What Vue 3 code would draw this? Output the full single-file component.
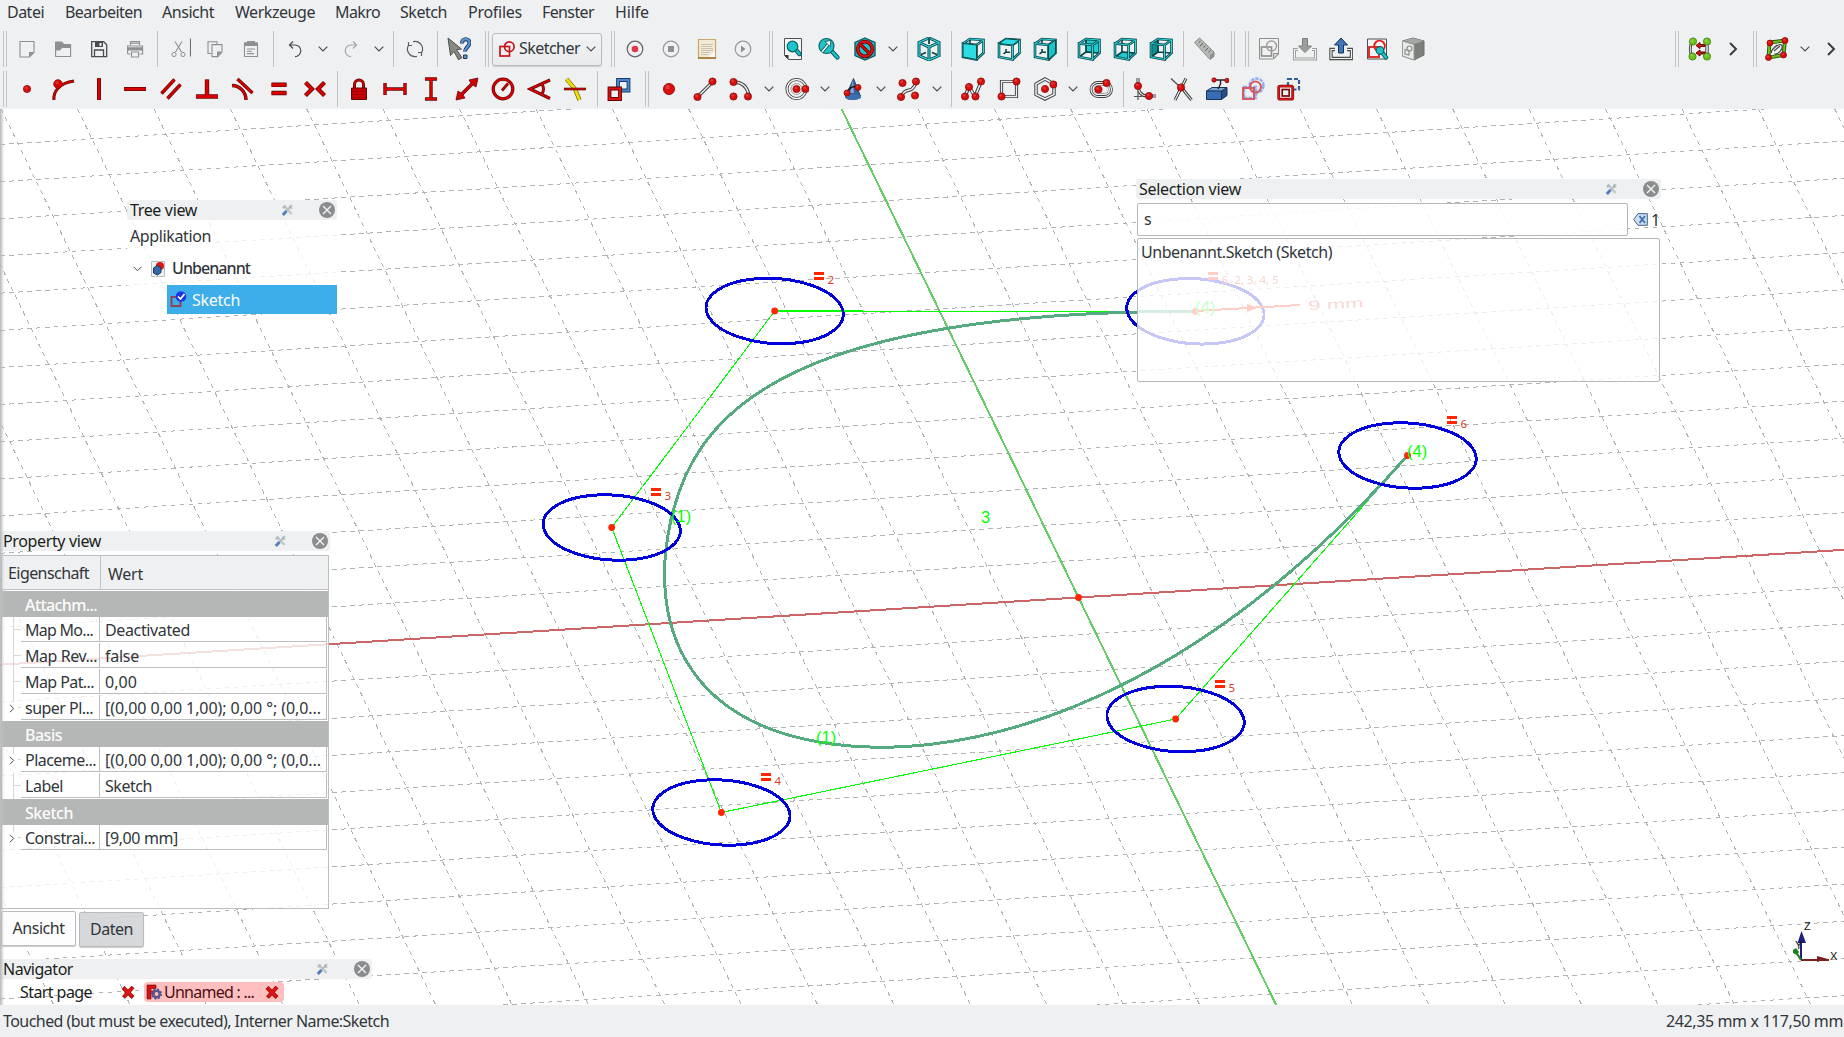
<script setup>
const vFit = {
  mounted(el, { value }) {
    el.style.letterSpacing = '0px'
    const w = el.getBoundingClientRect().width
    el.style.letterSpacing = (value - w) / el.textContent.length + 'px'
  },
}

const menus = [
  ['Datei', 7, 37], ['Bearbeiten', 65, 77], ['Ansicht', 162, 52], ['Werkzeuge', 235, 80], ['Makro', 335, 45],
  ['Sketch', 400, 47], ['Profiles', 468, 54], ['Fenster', 542, 52], ['Hilfe', 615, 34],
].map((m, i, a) => ({ label: m[0], w: m[2], gap: m[1] - (i ? a[i - 1][1] + a[i - 1][2] : 0) }))

/* drawing helpers for the 24px icons */
const ball = (x, y, r = 3.6, c = '#d90d0d', s = '#8a0a0a') =>
  `<circle cx="${x}" cy="${y}" r="${r}" fill="${c}" stroke="${s}" stroke-width=".8"/><circle cx="${x - r * 0.25}" cy="${y - r * 0.3}" r="${r * 0.4}" fill="#fff" opacity=".18"/>`
const red = (d, w = 2.6) =>
  `<path d="${d}" fill="none" stroke="#5e0808" stroke-width="${w + 1.4}"/><path d="${d}" fill="none" stroke="#d80000" stroke-width="${w}"/>`
const tube = (d, w = 3.4) =>
  `<path d="${d}" fill="none" stroke="#3c3f3f" stroke-width="${w}"/><path d="${d}" fill="none" stroke="#eff0ee" stroke-width="${w - 1.9}"/>`
const thin = (d, c = '#8d8f91', w = 1.1) => `<path d="${d}" fill="none" stroke="${c}" stroke-width="${w}"/>`
const fill = (d, c, s = 'none', w = 1) => `<path d="${d}" fill="${c}" stroke="${s}" stroke-width="${w}"/>`

const cube = (face) => {
  const faces = {
    front: 'M2 6.5 15.5 8v14.5L2 20Z', top: 'M2 6.5 9 1.8 22.5 3 15.5 8Z', right: 'M15.5 8 22.5 3v13l-7 6.5Z',
    rear: 'M9 2 22.5 3v13L9 15Z', bottom: 'M2 20 9 15l13.5 1-7 6.5Z', left: 'M2 6.5 9 2v13l-7 5Z',
  }
  const inner = face === 'rear' || face === 'bottom' || face === 'left'
  const all = 'M2 6.5 15.5 8v14.5L2 20ZM2 6.5 9 2 22.5 3v13l-7 6.5M15.5 8 22.5 3'
  const edge = (d) => thin(d, '#06474a', 2.6) + thin(d, '#2fd3da', 1)
  const hidden = inner ? thin('M9 2v13l13.5 1M9 15 2 20', '#06474a', 1.6) : thin('M9 3v5M9 12v3l-2.500 1.800M9 15l4 .3', '#06474a', 1.6)
  return (inner ? fill(faces[face], face === 'left' ? '#0f8f96' : '#1fcad1', '#06474a', 1) : '') + hidden + edge(all) +
    (inner ? '' : fill(faces[face], face === 'right' ? '#19c3ca' : '#2bdde2', '#06474a', 1))
}
const lens = (x, y, r, hx, hy) =>
  `<path d="M${x + r * 0.7} ${y + r * 0.7} ${hx} ${hy}" stroke="#075c60" stroke-width="4.4" stroke-linecap="round"/><path d="M${x + r * 0.7} ${y + r * 0.7} ${hx} ${hy}" stroke="#19c6cd" stroke-width="2.4" stroke-linecap="round"/><circle cx="${x}" cy="${y}" r="${r}" fill="#1cc3c9" stroke="#0a6468" stroke-width="1.2"/>`
const hex = 'M12 1 22 5.5v13L12 23 2 18.5v-13Z'

const icons = {
  new: thin('M5 4.5h14v11l-4.5 4.5H5Z') + fill('M19 15h-5v5Z', '#8d8f91'),
  open: thin('M4.6 5v14.5h15V8') + fill('M4 4.5h7l2 2.5h7v4h-9l-2 2.5H4Z', '#8d8f91'),
  save: thin('M4.7 4.7h12l3 3v12h-15Z', '#4a4d50', 1.3) + fill('M8 4.5h8V10H8Z', '#4a4d50') + fill('M12.5 6h2v3h-2Z', '#eff0f1') + thin('M7.5 19.5v-6.500h9v6.500', '#4a4d50', 1.3),
  print: thin('M7.500 8V4.600h9V8M7.500 6.300h9M4.600 17V11h15v6h-3M7.500 17H4.600M4.600 11V9h15v2M8.500 15h7v5h-7Z') + fill('M4.500 10.500h15v3h-15Z', '#8d8f91'),
  cut: thin('M8 4.500 14.500 15M15 4.500 8.500 15') + '<circle cx="7" cy="17.500" r="2.100" fill="none" stroke="#8d8f91"/><circle cx="16" cy="17.500" r="2.100" fill="none" stroke="#8d8f91"/>' + thin('M23.500 1.500v18', '#6d7072'),
  copy: thin('M8 16.500H5V4.700h9v3M9 7.600h10v7.500l-4 4.500H9Z') + fill('M19 14.500h-5v5Z', '#8d8f91'),
  paste: thin('M5.500 6h13v13.500h-13Z') + fill('M5 5.500h3V4h8v1.500h3V9H5Z', '#8d8f91') + thin('M8 12h8M8 14.300h5M8 16.600h7'),
  undo: thin('M10 4.500 6.500 8l3.500 3.500M6.500 8h5.500a5.800 5.800 0 0 1 0 11.600', '#4a4d50', 1.2),
  redo: thin('M14 4.500 17.500 8 14 11.500M17.500 8H12a5.800 5.800 0 0 0 0 11.600', '#a3a5a7', 1.2),
  refresh: thin('M10 4.700a7.500 7.500 0 0 1 8.500 11M18.500 19v-3.500H15M14 19.300a7.500 7.500 0 0 1-8.500-11M5.500 5v3.500H9', '#5c5f61', 1.2),
  whats: `<path d="M15 6.500c0-6 7.500-5.500 7.500-.5 0 4-4.500 4-4.500 8.500" fill="none" stroke="#193a63" stroke-width="4"/><path d="M15 6.500c0-6 7.500-5.500 7.500-.5 0 4-4.500 4-4.500 8.500" fill="none" stroke="#5b94cf" stroke-width="2.200"/>` + fill('M16.500 18h3.500v3.500h-3.500Z', '#5b94cf', '#193a63') + fill('M1 1 14.500 12l-5 .7 5.500 8-3.500 2-4.500-8.200-3.500 4Z', '#858a83', '#4d504c', 1),
  record: '<circle cx="12" cy="12" r="7.800" fill="none" stroke="#5f6264" stroke-width="1.200"/><circle cx="12" cy="12" r="3.300" fill="#e0384a"/>',
  stop: '<circle cx="12" cy="12" r="7.800" fill="none" stroke="#989a9c" stroke-width="1.200"/>' + fill('M9 9h6v6H9Z', '#8d8f91'),
  macro: fill('M3.500 2.500h17v19h-17Z', '#f3ead6', '#c9a66a', 1.200) + thin('M3 21h18', '#ad8441', 2) + thin('M6 7.500h12M6 9.500h11M6 11.500h12M6 13.500h12M6 15.500h9M6 17.500h7', '#c5bda9', .9) + fill('M20 14v6h-6Z', '#fff'),
  play: '<circle cx="12" cy="12" r="7.800" fill="none" stroke="#989a9c" stroke-width="1.200"/>' + fill('M10 8.500 14.500 12 10 15.500Z', '#8d8f91'),
  fitall: fill('M3.500 1.500h17v21h-13l-4-4Z', '#f4f5f4', '#4f5250') + fill('M3.500 18h4v4.500Z', '#333') + lens(11.500, 9.500, 5.300, 18.500, 17),
  fitsel: lens(9.500, 9, 7.500, 20.500, 20.500) + thin('M5 15 11.500 7', '#084d50', 3.200) + thin('M5 15 11.500 7', '#fff', 1.600) + fill('M8 4.500 14 3.500 13 9.500Z', '#fff', '#084d50', .8),
  draw: fill(hex, '#1fc4cb', '#08575b', 1.300) + '<circle cx="12" cy="12" r="7.300" fill="none" stroke="#5e0000" stroke-width="3.800"/><circle cx="12" cy="12" r="7.300" fill="none" stroke="#e01010" stroke-width="2.200"/>' + red('M7 7 17 17', 2),
  iso: thin(hex + 'M2 5.500 12 10 22 5.500M12 10v13', '#06474a', 3) + thin(hex + 'M2 5.500 12 10 22 5.500M12 10v13', '#33d6dc', 1.200) + thin('M12 1v6M4 17.500l5-2M20 17.500l-5-2', '#06474a', 1.800),
  front: cube('front'), top: cube('top'), right: cube('right'), rear: cube('rear'), bottom: cube('bottom'), left: cube('left'),
  ruler: fill('M1.500 5.500 6.500 1 21 15v4.500L17 22.500Z', '#b5b7b4', '#8b8d8a') + fill('M17 18 21 15v4.500L17 22.500Z', '#8e908d') + thin('M7.500 4 5.800 5.600M10 6.300 7 9M12.500 8.700l-2 1.800M15 11l-3 2.800M17.500 13.400l-2 1.800', '#5e605e', 1),
  newsk: fill('M2.500 1.500h19v15.500l-5 5h-14Z', '#f1f1f1', '#8d8f8d') + '<rect x="4.500" y="10" width="10" height="9" fill="none" stroke="#8d8f8d" stroke-width="1.600"/><circle cx="14.500" cy="9" r="5" fill="none" stroke="#9fa19f" stroke-width="1.500"/>' + fill('M21.500 16.500h-5v5.500Z', '#d8d8d8', '#8d8f8d'),
  leavein: thin('M5 12.500H1.500v9.500h21v-9.500H19', '#a0a2a0', 3) + thin('M5 12.500H1.500v9.500h21v-9.500H19', '#f3f3f3', 1) + fill('M9.500 1.500h5V9h4L12 15.500 5.500 9h4Z', '#9b9e9a', '#7c7f7b'),
  leave: thin('M6 12.500H2v9h20.500v-9H18', '#4b4e4c', 3.400) + thin('M6 12.500H2v9h20.500v-9H18', '#f3f3f3', 1.200) + fill('M9.500 16V8h-4L12 1l6.500 7h-4v8Z', '#3f74b5', '#16365f'),
  viewsk: fill('M2.500 2h19v20h-19Z', '#f6f6f6', '#4f5250') + '<rect x="4" y="10" width="10" height="10" fill="none" stroke="#e01b1b" stroke-width="1.800"/><circle cx="14.500" cy="9" r="5.300" fill="none" stroke="#e01b1b" stroke-width="1.800"/>' + lens(15, 13.500, 3.800, 21, 20.500),
  mapsk: fill('M1.500 4 12 1l11 3v14l-10 5-11.500-4Z', '#7d7f7d', '#6d6f6d') + fill('M1.500 4 13 7.500V23L1.500 19Z', '#e9e9e9', '#9a9c9a') + fill('M3 3.500 12 1l10.500 3L13 7Z', '#a5a7a5') + thin('M4 12.500l4 1v4.500l-4-1Z', '#8d8f8d', 1.200) + '<circle cx="8.500" cy="11.500" r="2.500" fill="none" stroke="#8d8f8d" stroke-width="1.200"/>',

  cpoint: ball(12, 12, 3.600),
  ccoin: red('M3 23c-1-8 5-17 20-19', 1.700) + ball(7, 7, 4.300, '#d40000'),
  cvert: red('M12 1v22'),
  chor: red('M1 12h22'),
  cpar: red('M2.500 16.500 15.500 2.500M8.500 21.500 21.500 7.500', 2),
  cperp: red('M12 2.500v17M1 19.500h22', 3),
  ctan: red('M6.500 2 21.500 16', 2) + red('M1 8.500c8 0 14 7 14 14.500', 2),
  ceq: red('M4.500 7.800h15M4.500 16h15', 3.200),
  csym: red('M2.500 5.500 9 12l-6.500 6.500M21.500 5.500 15 12l6.500 6.500', 2.800),
  lock: red('M7.500 12V7.500a4.500 4.500 0 0 1 9 0V12', 1.600) + fill('M4.500 11h15v11.500h-15Z', '#cc0000', '#5e0808') + thin('M5 14.500h14M5 17.500h14M5 20.500h14', '#8f0000', .7),
  hdist: red('M2 6v12M22 6v12M2 12h20', 2),
  vdist: red('M6 2h12M6 22h12M12 2v20', 2),
  dist: red('M4 20 20 4', 2.200) + fill('M23 1l-2 9-3-2-2-2-2-3ZM1 23l2-9 3 2 2 2 2 3Z', '#d80000', '#5e0808', .8),
  radius: '<circle cx="12" cy="12" r="9.800" fill="none" stroke="#5e0808" stroke-width="3.200"/><circle cx="12" cy="12" r="9.800" fill="none" stroke="#d80000" stroke-width="1.900"/>' + red('M11 13.500 17 6.500', 1.300),
  angle: red('M23 3 3 12l20 9.500', 1.700) + red('M15 7q3 5 0 10', 1.500),
  snell: thin('M3.500 2 12 12l4.500 11', '#6f6500', 4.200) + thin('M3.500 2 12 12l4.500 11', '#f0dc10', 2.800) + red('M1 12h22', 1.200),
  swap: '<path d="M11 3h10.500v10.500H11Z" fill="none" stroke="#173a6d" stroke-width="3.800"/><path d="M11 3h10.500v10.500H11Z" fill="none" stroke="#4c86cc" stroke-width="2"/><path d="M2.500 11.500H13V22H2.500Z" fill="#eff0f1" stroke="#5e0000" stroke-width="3.800"/><path d="M2.500 11.500H13V22H2.500Z" fill="none" stroke="#e01010" stroke-width="2"/>',
  gpoint: ball(12, 12, 5.600),
  gline: tube('M5 19.500 20 4.500') + ball(4.500, 20) + ball(19.500, 4.500),
  garc: tube('M4.500 5c9 0 14 5 15.500 14') + ball(4.500, 5) + ball(4.500, 19.500) + ball(19, 19.500),
  gcircle: '<circle cx="11.500" cy="12" r="9.500" fill="none" stroke="#3c3f3f" stroke-width="3"/><circle cx="11.500" cy="12" r="9.500" fill="none" stroke="#f1f2f0" stroke-width="1.500"/><circle cx="11.500" cy="12" r="5.500" fill="#f1f2f0" stroke="#8a8c8b" stroke-width=".8"/>' + ball(11.500, 12) + ball(20.500, 12),
  cone: fill('M12.500 1.500 19.500 19c1 4-15.500 5-15 .5Z', '#356199', '#1b3557', .8) + fill('M12 2.500 9 16h4Z', '#7ba6d6') + '<ellipse cx="12" cy="20" rx="8" ry="3" fill="#3b6fb0"/>' + thin('M5.500 16q4-8 12-6', '#111', 1.500) + ball(6, 16, 3) + ball(17, 10.500, 3),
  bspline: tube('M4 20.500c3-9 8-6 11-8.500s4-6 5-8') + ball(5.500, 6) + ball(19, 4.500) + ball(4, 20) + ball(18, 18.500),
  poly: tube('M4 19.500 8 9.500l6 10L20 5') + ball(4, 19.500) + ball(8, 10) + ball(14.500, 19.500) + ball(20, 4.500),
  rect: tube('M4.500 4.500h15v15h-15Z', 3.200) + ball(19.500, 4.500) + ball(4.500, 19.500),
  hexa: tube('M12 2 21 7v10.500L12 22 3 17.500V7Z') + ball(12, 12) + ball(20.500, 7.500),
  slot: '<rect x="2" y="5.500" width="20.500" height="14" rx="7" fill="none" stroke="#3c3f3f" stroke-width="2.800"/><rect x="2" y="5.500" width="20.500" height="14" rx="7" fill="none" stroke="#f1f2f0" stroke-width="1.200"/><rect x="5" y="8.500" width="14.500" height="8" rx="4" fill="none" stroke="#8a8c8b" stroke-width=".8"/>' + ball(9.500, 12.500) + ball(17.500, 6),
  fillet: tube('M5 1v8q1 10 9 10h9', 3) + thin('M5 14v9M1 19.500h8', '#555', 1.200) + ball(5, 9) + ball(16, 19),
  trim: tube('M17 1.500 6 23M12 10l10.500 13', 3) + thin('M2 1.500 10 9', '#555', 1.400) + ball(12, 10.500),
  ext: fill('M1.500 14 7 10.500h15l-5 4Z', '#7ea6d9', '#15335c') + fill('M1.500 14h15v8.500h-15Z', '#376db0', '#15335c') + fill('M16.500 14 22 10.500v8l-5.500 4Z', '#244f86', '#15335c') + thin('M9 3h13M15.500 3v4M13 12l3-6', '#222', 1.400) + ball(9, 3, 2.200) + ball(22, 3.500, 2.200),
  carbon: '<circle cx="15.500" cy="8.500" r="7" fill="none" stroke="#8fabf0" stroke-width="2.400" stroke-dasharray="3.500 1"/><rect x="3" y="10" width="12" height="11" fill="none" stroke="#8fabf0" stroke-width="2.400" stroke-dasharray="3.500 1"/><circle cx="14.500" cy="10" r="5.500" fill="none" stroke="#d65a5f" stroke-width="2"/><rect x="2" y="11" width="11" height="11" fill="none" stroke="#d65a5f" stroke-width="2"/>',
  constr: '<path d="M11 2h11v10.500H11Z" fill="none" stroke="#2f5d9e" stroke-width="2.200" stroke-dasharray="4 2"/><rect x="1.700" y="9.200" width="14" height="13" rx="1.500" fill="#fff" stroke="#8a0c0c" stroke-width="2.800"/><rect x="1.700" y="9.200" width="14" height="13" rx="1.500" fill="none" stroke="#d81616" stroke-width="1.500"/><rect x="5.200" y="12.500" width="7" height="6.500" fill="#eff0f1" stroke="#7a0a0a" stroke-width="1.700"/>',
  surf1: tube('M20 4.500v15', 3.400) + tube('M5 4.500q-3.500 7.500 0 15', 2.800) + fill('M18 7.500h-5V5.500L9 8.500l4 3V9.500h5ZM18 15h-5v-2l-4 3 4 3v-2h5Z', '#d41414', '#600') + ball(6, 4.500, 3.600, '#6cc41b', '#3b7a08') + ball(20, 4.500, 3.600, '#6cc41b', '#3b7a08') + ball(5.500, 19.500, 3.600, '#6cc41b', '#3b7a08') + ball(20, 19.500, 3.600, '#6cc41b', '#3b7a08'),
  surf2: thin('M4.500 5.500 20 3.500 18.500 18 3.500 20.500Z', '#28520c', 3.800) + thin('M4.500 5.500 20 3.500 18.500 18 3.500 20.500Z', '#6cc41b', 2) + thin('M6.500 16c-1-4 8-10 10-8s-2 10-7 9M9 14l6-5M8 12l4-4', '#3f4241', 1.100) + ball(5, 6, 3) + ball(20, 3.500, 3) + ball(3.500, 20.500, 3) + ball(18.500, 18, 3),
}

const row1 = 'H new open save print | cut copy paste | undo v redo v | refresh | whats H combo H record stop macro play H fitall fitsel draw v | iso | front top right | rear bottom left | ruler H H newsk leavein leave viewsk mapsk'.split(' ')
const row1r = 'H surf1 > H surf2 v >'.split(' ')
const row2 = 'H cpoint ccoin cvert chor cpar cperp ctan ceq csym | lock hdist vdist dist radius angle snell | swap H gpoint gline garc v gcircle v cone v bspline v | poly rect hexa v slot | fillet trim ext carbon constr'.split(' ')
const toolbars = [{ left: row1, right: row1r }, { left: row2, right: [] }]

/* sketch scene, in pixels of the 3D view (view origin = window 0,109) */
const OX = 1078.5, OY = 488.5, SA = -0.0623, SB = 0.485
const gridA = [], gridB = []
for (let k = -17; k <= 14; k++) {
  if (!k) continue
  const y = OY + k * 37.15
  gridA.push([0, y - OX * SA, 1844, y + (1844 - OX) * SA])
}
for (let k = -18; k <= 15; k++) {
  if (!k) continue
  const x = OX + k * 76.4
  gridB.push([x - OY * SB, 0, x + (896 - OY) * SB, 896])
}
const P = [[1195.4, 202.3], [774.700, 202], [611.700, 418.500], [721.400, 703.500], [1175.600, 610], [1407.500, 346.500]]
const mix = (a, b, t) => [a[0] + (b[0] - a[0]) * t, a[1] + (b[1] - a[1]) * t]
const B2 = mix(P[1], P[2], 0.5), C1 = mix(P[2], P[3], 1 / 3), C2 = mix(P[2], P[3], 2 / 3), D1 = mix(P[3], P[4], 0.5)
const B3 = mix(B2, C1, 0.5), C3 = mix(C2, D1, 0.5)
const curve = `M${P[0]}C${P[1]} ${B2} ${B3}C${C1} ${C2} ${C3}C${D1} ${P[4]} ${P[5]}`
const equals = P.map((p, i) => ({ x: Math.round(p[0] + (i ? 39.300 : 12.500)), y: Math.round(p[1] - 39.500), t: i ? String(i + 1) : '6, 2, 3, 4, 5' }))

const props = [
  { cat: 'Attachm...' },
  { k: 'Map Mo...', kw: 68, v: 'Deactivated', w: 85 },
  { k: 'Map Rev...', kw: 72, v: 'false', w: 34 },
  { k: 'Map Pat...', kw: 69, v: '0,00', w: 32 },
  { k: 'super Pl...', kw: 68, v: '[(0,00 0,00 1,00); 0,00 °; (0,0...', w: 216, e: 1 },
  { cat: 'Basis' },
  { k: 'Placeme...', kw: 71, v: '[(0,00 0,00 1,00); 0,00 °; (0,0...', w: 216, e: 1 },
  { k: 'Label', kw: 38, v: 'Sketch', w: 47 },
  { cat: 'Sketch' },
  { k: 'Constrai...', kw: 70, v: '[9,00 mm]', w: 73, e: 1 },
]
const catW = { 'Attachm...': 72, Basis: 37, Sketch: 48 }

const toolIcon = '<path d="M3 1.500 10.500 10" stroke="#c2c6c9" stroke-width="2.400"/><path d="M1 3.500 3.500 1l1.500 2-2 2Z" fill="#b5babd"/><path d="M11 1 5 7.500" stroke="#b5babd" stroke-width="1.600"/><path d="M5.500 7 1.800 11" stroke="#4f7fbd" stroke-width="3"/><path d="M9 1.500v2.500h2.500" fill="none" stroke="#a0a5a8" stroke-width="1.200"/>'
const closeIcon = '<circle cx="8" cy="8" r="8" fill="#8a8c8e"/><path d="M4 4 12 12M12 4 4 12" stroke="#f4f4f4" stroke-width="1.400"/>'
const redX = '<path d="M2 2.500 12 12.500M12 2 2.500 12.500" stroke="#8a0c0c" stroke-width="4"/><path d="M2.500 3 11.500 12M11.500 2.500 3 12" stroke="#df1515" stroke-width="2.800"/>'
</script>

<template>
  <div class="app">
    <nav class="menubar">
      <span v-for="m in menus" :key="m.label" class="menu" :style="{ marginLeft: m.gap + 'px', width: m.w + 'px' }"><span v-fit="m.w">{{ m.label }}</span></span>
    </nav>
    <div v-for="(bar, b) in toolbars" :key="b" class="toolbar">
      <div v-for="(side, s) in [bar.left, bar.right]" :key="s" class="side">
        <template v-for="(it, i) in side" :key="i">
          <i v-if="it === 'H'" class="handle" />
          <i v-else-if="it === '|'" class="sep" />
          <span v-else-if="it === 'v'" class="chev"><svg width="10" height="6" viewBox="0 0 10 6"><path d="M.7.7 5 5 9.300.7" fill="none" stroke="#4a4d50" stroke-width="1.200" /></svg></span>
          <span v-else-if="it === '>'" class="more"><svg width="9" height="14" viewBox="0 0 9 14"><path d="M1 1 7 7 1 13" fill="none" stroke="#3b3e41" stroke-width="2" /></svg></span>
          <div v-else-if="it === 'combo'" class="combo">
            <svg width="16" height="16" viewBox="0 0 16 16" fill="none" stroke="#c8141e" stroke-width="1.700"><rect x="1" y="5.500" width="9.500" height="9.500" /><circle cx="10.300" cy="5.700" r="4.800" /></svg>
            <span v-fit="61" class="combo-text">Sketcher</span>
            <svg width="10" height="6" viewBox="0 0 10 6"><path d="M.7.7 5 5 9.300.7" fill="none" stroke="#4a4d50" stroke-width="1.200" /></svg>
          </div>
          <span v-else class="tool"><svg width="24" height="24" viewBox="0 0 24 24" v-html="icons[it]" /></span>
        </template>
      </div>
    </div>

    <main class="view">
      <svg class="scene" width="1844" height="896" viewBox="0 0 1844 896">
        <g stroke="#b2b2b2" stroke-width="1" shape-rendering="crispEdges">
          <line v-for="(l, i) in gridA" :key="'a' + i" :x1="l[0]" :y1="l[1]" :x2="l[2]" :y2="l[3]" stroke-dasharray="4.600 4.400" />
          <line v-for="(l, i) in gridB" :key="'b' + i" :x1="l[0]" :y1="l[1]" :x2="l[2]" :y2="l[3]" stroke-dasharray="4.400 4.600" />
        </g>
        <g fill="none" shape-rendering="crispEdges">
          <line x1="0" :y1="OY - OX * SA" x2="1844" :y2="OY + (1844 - OX) * SA" stroke="#cc6666" stroke-width="2" />
          <line :x1="OX - OY * SB" y1="0" :x2="OX + (896 - OY) * SB" y2="896" stroke="#66cc66" stroke-width="2" />
          <polyline :points="P.join(' ')" stroke="#00ff00" stroke-width="1.100" />
          <path :d="curve" stroke="#55aa80" stroke-width="3" />
          <circle v-for="(p, i) in P" :key="i" r="1" :transform="`matrix(66.8 -4.180 15.700 32.450 ${p[0]} ${p[1]})`" stroke="#0000dc" stroke-width="3" vector-effect="non-scaling-stroke" />
          <path d="M1195 202 1300 196" stroke="#ff2600" stroke-width="2" />
        </g>
        <g fill="#ff2600">
          <circle v-for="(p, i) in P" :key="i" :cx="p[0]" :cy="p[1]" r="3.400" />
          <circle :cx="OX" :cy="OY" r="3.400" />
          <path d="M1258 198.500 1247 195v8Z" />
          <template v-for="(e, i) in equals" :key="i">
            <rect :x="e.x" :y="e.y" width="10" height="3" /><rect :x="e.x" :y="e.y + 5" width="10" height="3" />
            <text :x="e.x + 13.500" :y="e.y + 12" class="sub">{{ e.t }}</text>
          </template>
          <text class="dim" transform="translate(1308.500 201) rotate(-3) scale(1.700 1)" fill="#e05040">9 mm</text>
        </g>
        <g class="knot">
          <text x="671" y="413">(1)</text>
          <text x="816" y="634">(1)</text>
          <text x="1195" y="203.500">(4)</text>
          <text x="1407" y="347.500">(4)</text>
          <text x="981" y="414">3</text>
        </g>
        <g fill="none" stroke-width="2" font-family="Liberation Sans, sans-serif" font-size="11">
          <path d="M1801 851v-25" stroke="#20207c" /><path d="M1801.500 822l4.500 12h-8.500Z" fill="#20207c" stroke="none" />
          <path d="M1801 851h28" stroke="#7c2020" /><path d="M1828 850l-11-3v6Z" fill="#7c2020" stroke="none" />
          <path d="M1801 851l-5-8" stroke="#207c20" /><path d="M1793 841l3-2 3 4-2 3-4-2Z" fill="#208020" stroke="none" />
          <text x="1804" y="821" fill="#111">Z</text><text x="1830" y="850.500" fill="#111">X</text><text x="1795" y="840" fill="#111">Y</text>
        </g>
      </svg>

      <section class="dock tree">
        <header class="title"><span v-fit="67">Tree view</span><svg class="tl" width="12" height="12" viewBox="0 0 12 12" v-html="toolIcon" /><svg class="cl" width="16" height="16" viewBox="0 0 16 16" v-html="closeIcon" /></header>
        <div class="tree-body">
          <div class="row app-row"><span v-fit="81">Applikation</span></div>
          <div class="row doc-row">
            <svg width="9" height="6" viewBox="0 0 9 6"><path d="M.5.7 4.500 4.700 8.500.7" fill="none" stroke="#4a4d50" /></svg>
            <svg class="doc" width="14" height="16" viewBox="0 0 14 16"><path d="M.5.500h13v15H.5Z" fill="#f2f2f2" stroke="#bcbcbc" /><circle cx="9" cy="5" r="4" fill="#e01616" /><path d="M2.500 7 6 4.500 10 6.500v5L6.500 14 2.500 12Z" fill="#3568a5" stroke="#1a3760" /></svg>
            <span v-fit="78" class="medium">Unbenannt</span>
          </div>
          <div class="row sel-row">
            <svg width="17" height="17" viewBox="0 0 17 17"><rect x="1.500" y="6" width="9" height="9" fill="none" stroke="#983848" stroke-width="1.800" /><circle cx="11" cy="5.500" r="5.300" fill="#1a35e8" /><path d="M8 5.500 10.500 8 14.500 3" fill="none" stroke="#fff" stroke-width="1.700" /></svg>
            <span v-fit="48">Sketch</span>
          </div>
        </div>
      </section>

      <section class="dock property">
        <header class="title"><span v-fit="98">Property view</span><svg class="tl" width="12" height="12" viewBox="0 0 12 12" v-html="toolIcon" /><svg class="cl" width="16" height="16" viewBox="0 0 16 16" v-html="closeIcon" /></header>
        <div class="table">
          <div class="thead"><span class="th1"><span v-fit="81">Eigenschaft</span></span><span class="th2"><span v-fit="35">Wert</span></span></div>
          <template v-for="(p, i) in props" :key="i">
            <div v-if="p.cat" class="cat"><span v-fit="catW[p.cat]">{{ p.cat }}</span></div>
            <div v-else class="prop">
              <span class="branch"><svg v-if="p.e" width="6" height="9" viewBox="0 0 6 9"><path d="M1 .8 4.700 4.500 1 8.200" fill="none" stroke="#4a4d50" /></svg></span>
              <span class="key"><span v-fit="p.kw">{{ p.k }}</span></span>
              <span class="val"><span v-fit="p.w">{{ p.v }}</span></span>
            </div>
          </template>
        </div>
        <div class="tabs"><div class="tab on"><span v-fit="52">Ansicht</span></div><div class="tab off"><span v-fit="43">Daten</span></div></div>
      </section>

      <section class="dock navigator">
        <header class="title"><span v-fit="70">Navigator</span><svg class="tl" width="12" height="12" viewBox="0 0 12 12" v-html="toolIcon" /><svg class="cl" width="16" height="16" viewBox="0 0 16 16" v-html="closeIcon" /></header>
        <div class="nav-row">
          <div class="page start"><span v-fit="72">Start page</span><svg width="14" height="14" viewBox="0 0 14 14" v-html="redX" /></div>
          <div class="page current">
            <svg width="17" height="16" viewBox="0 0 17 16"><path d="M1 1h9v3.500H5v2.500h3.500v3H5v5H1Z" fill="#d01414" stroke="#700" stroke-width=".6" /><circle cx="10.500" cy="10" r="3.300" fill="none" stroke="#5a5490" stroke-width="2.600" /><circle cx="10.500" cy="10" r="4.900" fill="none" stroke="#5a5490" stroke-width="1.500" stroke-dasharray="2 1.850" /></svg>
            <span v-fit="90" class="un">Unnamed : ...</span><svg width="14" height="14" viewBox="0 0 14 14" v-html="redX" />
          </div>
        </div>
      </section>

      <section class="dock selection">
        <header class="title"><span v-fit="102">Selection view</span><svg class="tl" width="12" height="12" viewBox="0 0 12 12" v-html="toolIcon" /><svg class="cl" width="16" height="16" viewBox="0 0 16 16" v-html="closeIcon" /></header>
        <div class="search">
          <div class="input"><span>s</span></div>
          <svg width="15" height="13" viewBox="0 0 15 13"><path d="M5 .700h9.300v11.600H5L.700 6.500Z" fill="#cfe0f2" stroke="#3f5f86" /><path d="M6.500 3 12 10M12 3 6.500 10" stroke="#3f74b5" stroke-width="2" /></svg>
          <span class="count">1</span>
        </div>
        <div class="list"><span v-fit="191">Unbenannt.Sketch (Sketch)</span></div>
      </section>
      <div class="edge" />
    </main>

    <footer class="status"><span v-fit="386">Touched (but must be executed), Interner Name:Sketch</span><span v-fit="177">242,35 mm x 117,50 mm</span></footer>
  </div>
</template>

<style>
body { margin: 0; overflow: hidden; }
</style>

<style scoped>
.app { width: 1844px; height: 1037px; display: flex; flex-direction: column; background: #eff0f1; font: 16px/20px "Noto Sans", sans-serif; color: #31363b; overflow: hidden; white-space: nowrap; }
span { display: inline-block; }
svg { display: block; flex: none; }
.menubar { height: 29px; display: flex; align-items: flex-start; padding-top: 2px; box-sizing: border-box; }
.menu { flex: none; }
.toolbar { height: 40px; display: flex; justify-content: space-between; }
.side { display: flex; align-items: center; }
.side:first-child { margin-left: -5px; }
.side:last-child { margin-right: 1px; }
.tool { width: 36px; display: flex; justify-content: center; }
.handle { width: 4px; height: 36px; margin: 0 2px 0 8px; box-sizing: border-box; border: solid #c1c3c4; border-width: 0 1px; flex: none; }
.sep { width: 1px; height: 36px; margin: 0 3px 0 4px; background: #bfc1c2; flex: none; }
.chev { width: 20px; display: flex; justify-content: center; }
.more { width: 28px; box-sizing: border-box; display: flex; justify-content: center; padding-left: 5px; }
.combo { width: 110px; height: 33px; margin: 0 1px; box-sizing: border-box; border: 1px solid #b9bbbd; border-radius: 3px; box-shadow: 0 1px 1px #c9cbcc; display: flex; align-items: center; padding: 0 6px; background: linear-gradient(#f2f3f4, #e9eaeb); }
.combo-text { margin: 0 7px 2px 4px; }
.combo svg:last-child { margin-left: -1px; }
.view { position: relative; height: 896px; background: #fff; overflow: hidden; flex: none; }
.sub { font: 11.500px "Noto Sans", sans-serif; fill: #d83a28; }
.dim { font: 13px "Liberation Sans", sans-serif; }
.knot { fill: #00ff00; font: 16.500px "Liberation Sans", sans-serif; }
.dock { position: absolute; }
.edge { position: absolute; left: 0; top: 0; width: 4px; height: 100%; background: linear-gradient(90deg, #b5b7b8, rgba(220, 220, 220, 0.1)); }
.title { height: 20px; background: #eff0f1; border-radius: 3px; display: flex; align-items: center; color: #1b1e20; padding: 0 2px 0 3px; }
.tl { margin-left: auto; }
.cl { margin-left: 26px; }
.tree { left: 127px; top: 91px; width: 210px; }
.tree-body { background: rgba(255, 255, 255, 0.8); height: 94px; }
.row { display: flex; align-items: center; }
.app-row { height: 32px; padding-left: 3px; }
.doc-row { height: 33px; padding-left: 6px; }
.doc { margin: 0 7px 0 9px; }
.medium { font-weight: 500; margin-top: -2px; }
.sel-row { height: 29px; margin-left: 40px; background: #3daee9; color: #fcfcfc; padding-left: 3px; }
.sel-row span { margin-left: 5px; }
.property { left: 0; top: 422px; width: 330px; }
.table { margin: 4px 1px 0 1px; height: 354px; box-sizing: border-box; border: 1px solid #bcbebf; background: rgba(255, 255, 255, 0.8); }
.thead { height: 34px; display: flex; align-items: center; background: #eff0f1; border-bottom: 1px solid #c0c2c3; margin-bottom: 1px; box-sizing: border-box; }
.th1 { width: 92px; padding-left: 6px; line-height: 33px; border-right: 1px solid #c0c2c3; }
.th1 > span { position: relative; top: 1px; }
.th2 { padding-left: 7px; }
.th2 > span { position: relative; top: 1px; }
.cat { height: 26px; background: #b5b7b6; color: #fcfcfc; font-weight: 500; padding-left: 23px; line-height: 28px; }
.cat:not(:nth-child(2)) { margin-top: 1px; }
.prop { height: 26px; display: flex; }
.prop:nth-last-child(1), .prop + .cat { margin-top: 0; }
.branch { width: 16px; margin-left: 2px; padding-right: 1px; display: flex; align-items: center; justify-content: center; background: linear-gradient(#d5d7d8, #d5d7d8) 9px 0 / 1px 100% no-repeat, linear-gradient(#d5d7d8, #d5d7d8) 9px 12px / 10px 1px no-repeat; }
.branch:has(svg) { background: linear-gradient(#d5d7d8, #d5d7d8) 9px 0 / 1px 7px no-repeat, linear-gradient(#d5d7d8, #d5d7d8) 14px 12px / 4px 1px no-repeat; }
.key { width: 79px; padding-left: 4px; box-sizing: border-box; border: solid #bcbebf; border-width: 0 1px 1px 0; line-height: 26px; height: 25px; }
.val { flex: 1; padding-left: 5px; margin-right: 1px; border: solid #bcbebf; border-width: 0 1px 1px 0; line-height: 26px; height: 24px; }
.tabs { display: flex; margin: 2px 0 0 1px; gap: 3px; }
.tab { height: 35px; box-sizing: border-box; border: 1px solid #b9bbbd; border-radius: 2px; line-height: 32px; text-align: center; box-shadow: 0 1px 1px #ccc; }
.on { width: 75px; background: #fdfdfd; }
.off { width: 65px; margin-top: 1px; background: rgba(210, 212, 213, 0.9); }
.navigator { left: 0; top: 850px; width: 372px; }
.nav-row { display: flex; align-items: center; margin-top: 3px; }
.page { display: flex; align-items: center; height: 20px; color: #1b1e20; }
.start { width: 124px; padding-left: 20px; }
.start svg { margin-left: 29px; }
.current { width: 140px; background: #ffbfbf; border-radius: 4px; color: #4a1015; }
.current svg:first-child { margin-left: 2px; }
.un { margin: 0 11px 0 1px; }
.selection { left: 1136px; top: 70px; width: 525px; }
.search { display: flex; align-items: center; margin-top: 4px; padding-left: 1px; }
.input { width: 491px; height: 33px; box-sizing: border-box; border: 1px solid #b5b7b8; border-radius: 2px; background: rgba(255, 255, 255, 0.9); padding-left: 6px; line-height: 31px; margin-right: 5px; }
.count { margin-left: 3px; }
.list { margin: 2px 1px 0 1px; height: 144px; box-sizing: border-box; border: 1px solid #b5b7b8; border-radius: 2px; background: rgba(255, 255, 255, 0.78); padding: 3px 3px; }
.status { flex: 1; display: flex; justify-content: space-between; align-items: center; padding: 0 1px 0 3px; }
</style>
